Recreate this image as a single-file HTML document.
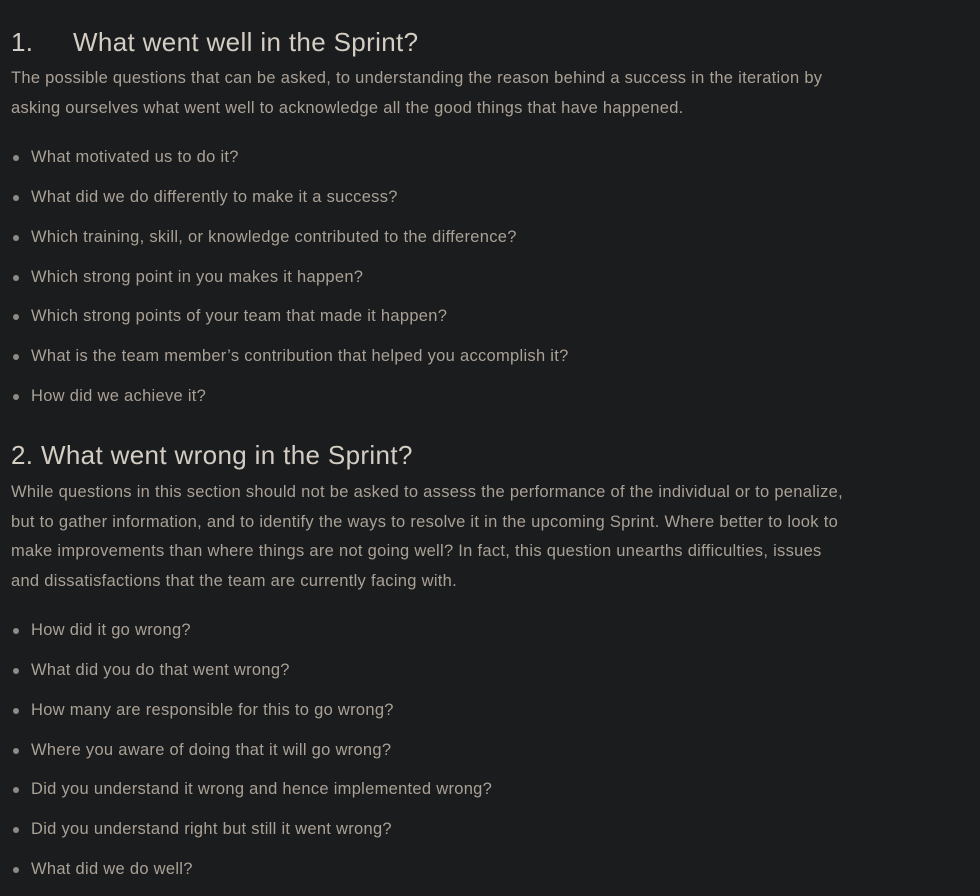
<!DOCTYPE html>
<html><head><meta charset="utf-8"><style>
html,body{margin:0;padding:0;background:#1b1c1e;width:980px;height:896px;overflow:hidden}
body{position:relative;font-family:"Liberation Sans",sans-serif}
.l{position:absolute;left:11px;white-space:nowrap;font-size:16.5px;line-height:20px;color:#aaa196;letter-spacing:0.29px}
.h{position:absolute;white-space:nowrap;font-size:26px;line-height:30px;color:#d3cdc3;letter-spacing:0.35px}
.b{position:absolute;left:31px;white-space:nowrap;font-size:16.5px;line-height:20px;color:#aaa196;letter-spacing:0.29px}
.b::before{content:"";position:absolute;left:-18px;top:8px;width:6px;height:6px;border-radius:50%;background:#8f8a84}
</style></head><body>
<div class="h" style="left:11px;top:27px">1.</div>
<div class="h" style="left:73px;top:27px">What went well in the Sprint?</div>
<div class="l" style="top:68px">The possible questions that can be asked, to understanding the reason behind a success in the iteration by</div>
<div class="l" style="top:98px">asking ourselves what went well to acknowledge all the good things that have happened.</div>
<div class="b" style="top:147px">What motivated us to do it?</div>
<div class="b" style="top:187px">What did we do differently to make it a success?</div>
<div class="b" style="top:227px">Which training, skill, or knowledge contributed to the difference?</div>
<div class="b" style="top:267px">Which strong point in you makes it happen?</div>
<div class="b" style="top:306px">Which strong points of your team that made it happen?</div>
<div class="b" style="top:346px">What is the team member’s contribution that helped you accomplish it?</div>
<div class="b" style="top:386px">How did we achieve it?</div>
<div class="h" style="left:11px;top:440px">2. What went wrong in the Sprint?</div>
<div class="l" style="top:482px">While questions in this section should not be asked to assess the performance of the individual or to penalize,</div>
<div class="l" style="top:512px">but to gather information, and to identify the ways to resolve it in the upcoming Sprint. Where better to look to</div>
<div class="l" style="top:541px">make improvements than where things are not going well? In fact, this question unearths difficulties, issues</div>
<div class="l" style="top:571px">and dissatisfactions that the team are currently facing with.</div>
<div class="b" style="top:620px">How did it go wrong?</div>
<div class="b" style="top:660px">What did you do that went wrong?</div>
<div class="b" style="top:700px">How many are responsible for this to go wrong?</div>
<div class="b" style="top:740px">Where you aware of doing that it will go wrong?</div>
<div class="b" style="top:779px">Did you understand it wrong and hence implemented wrong?</div>
<div class="b" style="top:819px">Did you understand right but still it went wrong?</div>
<div class="b" style="top:859px">What did we do well?</div>
</body></html>
